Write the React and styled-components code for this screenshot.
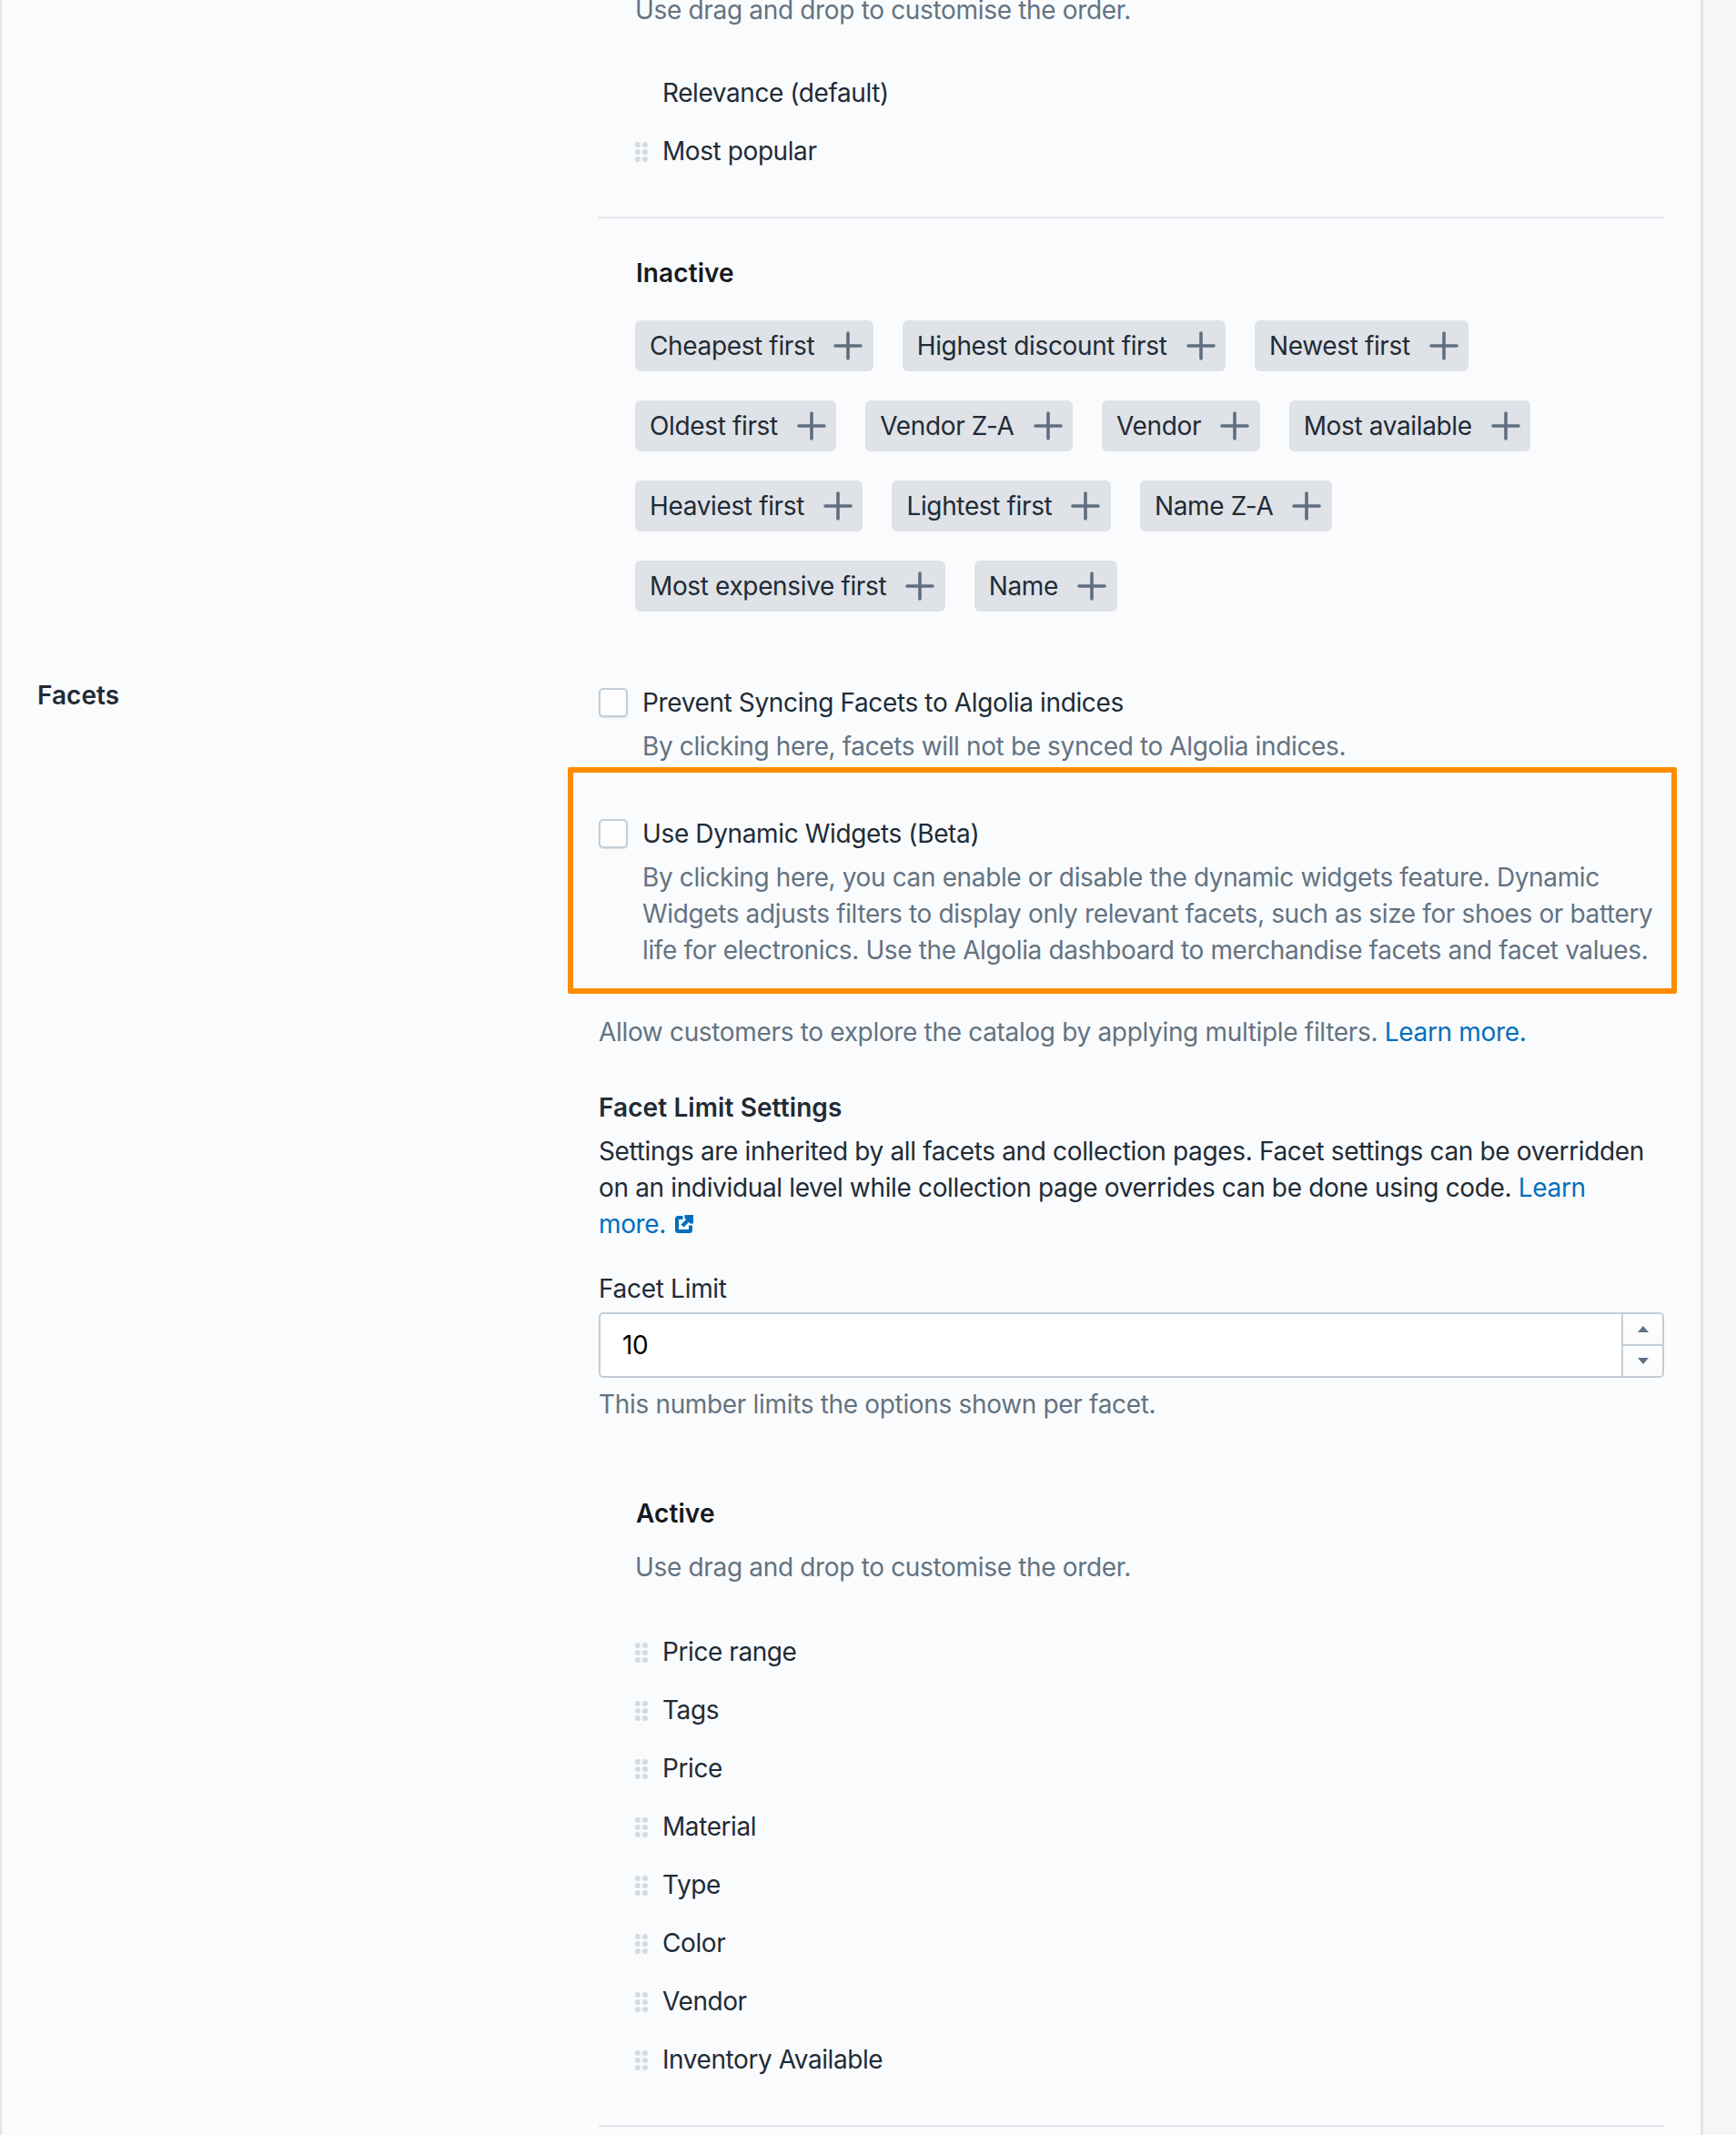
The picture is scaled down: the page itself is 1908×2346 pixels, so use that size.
import styled, { createGlobalStyle } from "styled-components";

const GlobalStyle = createGlobalStyle`
  html, body {
    margin: 0;
    padding: 0;
    background: #f5f6f8;
  }
  body {
    font-family: Inter, "Liberation Sans", sans-serif;
    font-size: 28px;
    line-height: 40px;
    letter-spacing: -0.37px;
    color: #212b36;
  }
`;

const Page = styled.div`
  width: 1908px;
  height: 2346px;
  overflow: hidden;
`;

const Panel = styled.main`
  box-sizing: border-box;
  width: 1872px;
  height: 2346px;
  background: #fafbfd;
  border-left: 2px solid #e3e5e9;
  border-right: 3px solid #e3e5e9;
  overflow: hidden;
`;

const Row = styled.section`
  display: grid;
  grid-template-columns: 656px 1171px;
`;

const RowTitle = styled.h2`
  margin: ${(p) => p.$top || 0}px 0 0 39px;
  font-size: 28px;
  line-height: 40px;
  font-weight: 600;
  letter-spacing: 0.05px;
  color: #212b36;
`;

const Content = styled.div`
  min-width: 0;
`;

const SortBlock = styled.div`
  padding-left: 40px;
  margin-top: ${(p) => p.$top || 0}px;
`;

const BlockTitle = styled.h3`
  margin: 0 0 ${(p) => p.$after || 0}px;
  padding-left: 1px;
  font-size: 28px;
  line-height: 40px;
  font-weight: 600;
  letter-spacing: 0.1px;
  color: #16191d;
`;

const Hint = styled.p`
  margin: ${(p) => p.$top || 0}px 0 ${(p) => p.$after || 0}px;
  letter-spacing: -0.33px;
  color: #637381;
`;

const SortList = styled.ul`
  list-style: none;
  margin: 0;
  padding: 0;
`;

const SortItem = styled.li`
  display: flex;
  align-items: center;
  height: 64px;
  letter-spacing: -0.42px;
`;

const HandleSlot = styled.span`
  flex: none;
  width: 30px;
  display: flex;
  align-items: center;

  svg {
    display: block;
    margin-top: 2px;
  }
`;

const Divider = styled.hr`
  margin: ${(p) => p.$top || 0}px 0 ${(p) => p.$after || 0}px;
  border: 0;
  height: 2px;
  background: #e1e3e8;
`;

const ChipWrap = styled.div`
  display: flex;
  flex-wrap: wrap;
  gap: 32px;
`;

const Chip = styled.button`
  display: inline-flex;
  align-items: center;
  height: 56px;
  padding: 0 11.5px 0 16px;
  border: 0;
  border-radius: 6px;
  background: #dfe2e7;
  color: #212b36;
  font: inherit;
  letter-spacing: -0.36px;
  gap: 21px;

  svg {
    display: block;
    width: 32px;
    height: 32px;
    stroke: #5f6f80;
  }
`;

const CheckRow = styled.label`
  display: grid;
  grid-template-columns: 32px 1fr;
  column-gap: 16px;
  margin-top: ${(p) => p.$top || 0}px;
`;

const CheckBox = styled.span`
  display: block;
  box-sizing: border-box;
  width: 32px;
  height: 32px;
  margin-top: 4px;
  border: 2px solid #c4cdd5;
  border-radius: 5px;
  background: #fdfdfe;
  box-shadow: 0 1px 1px rgba(99, 115, 129, 0.2);
`;

const CheckText = styled.div`
  min-width: 0;
`;

const CheckHelp = styled.div`
  margin-top: 8px;
  color: #637381;
`;

const Highlight = styled.div`
  margin: 3px -14px 22px -34px;
  padding: 47px 8px 22px 28px;
  border: 6px solid #ff8c00;
  border-radius: 2px;
`;

const TextLink = styled.a`
  color: #006fbb;
  text-decoration: none;
`;

const NoBreak = styled.span`
  white-space: nowrap;
`;

const SettingsTitle = styled.h4`
  margin: 43px 0 8px;
  font-size: 28px;
  line-height: 40px;
  font-weight: 600;
  letter-spacing: 0.1px;
  color: #212b36;
`;

const Paragraph = styled.p`
  margin: 0;
  letter-spacing: -0.35px;
`;

const ExternalIcon = styled.svg`
  display: inline-block;
  width: 20px;
  height: 20px;
  margin-left: 10px;
  vertical-align: 0;
`;

const FieldLabel = styled.div`
  margin: 31px 0 6px;
  letter-spacing: -0.3px;
`;

const NumberField = styled.div`
  box-sizing: border-box;
  display: flex;
  height: 72px;
  border: 2px solid #c4cdd5;
  border-radius: 5px;
  background: #fff;
  overflow: hidden;
`;

const NumberInput = styled.input`
  flex: 1;
  min-width: 0;
  border: 0;
  outline: 0;
  padding: 0 24px;
  background: transparent;
  color: #000;
  font: inherit;
  letter-spacing: inherit;
`;

const Spinner = styled.div`
  flex: none;
  width: 43px;
  display: flex;
  flex-direction: column;
  border-left: 2px solid #c4cdd5;
`;

const SpinButton = styled.div`
  flex: 1;
  display: flex;
  align-items: center;
  justify-content: center;
  background: linear-gradient(#fff, #f9fafb);

  & + & {
    border-top: 2px solid #c4cdd5;
  }

  svg {
    display: block;
    width: 12px;
    height: 7px;
    fill: #5f6f80;
  }
`;

const Handle = () => (
  <svg width="14" height="22" viewBox="0 0 14 22" fill="#d3dbe2">
    {[3, 11, 19].map((cy) => (
      <g key={cy}>
        <circle cx="2.9" cy={cy} r="3" />
        <circle cx="11" cy={cy} r="3" />
      </g>
    ))}
  </svg>
);

const PlusMark = () => (
  <svg viewBox="0 0 32 32" fill="none" strokeWidth="3.6" strokeLinecap="round">
    <path d="M16 2v28M2 16h28" />
  </svg>
);

const inactiveSorts = [
  "Cheapest first",
  "Highest discount first",
  "Newest first",
  "Oldest first",
  "Vendor Z-A",
  "Vendor",
  "Most available",
  "Heaviest first",
  "Lightest first",
  "Name Z-A",
  "Most expensive first",
  "Name",
];

const activeFacets = [
  "Price range",
  "Tags",
  "Price",
  "Material",
  "Type",
  "Color",
  "Vendor",
  "Inventory Available",
];

function App() {
  return (
    <Page>
      <GlobalStyle />
      <Panel>
        <Row>
          <div />
          <Content>
            <SortBlock $top={-9}>
              <Hint $after={39}>Use drag and drop to customise the order.</Hint>
              <SortList>
                <SortItem>
                  <HandleSlot />
                  Relevance (default)
                </SortItem>
                <SortItem>
                  <HandleSlot>
                    <Handle />
                  </HandleSlot>
                  Most popular
                </SortItem>
              </SortList>
            </SortBlock>
            <Divider $top={40} $after={40} />
            <SortBlock>
              <BlockTitle $after={32}>Inactive</BlockTitle>
              <ChipWrap>
                {inactiveSorts.map((name) => (
                  <Chip key={name} type="button">
                    {name}
                    <PlusMark />
                  </Chip>
                ))}
              </ChipWrap>
            </SortBlock>
          </Content>
        </Row>
        <Row>
          <RowTitle $top={72}>Facets</RowTitle>
          <Content>
            <CheckRow $top={80}>
              <CheckBox />
              <CheckText>
                Prevent Syncing Facets to Algolia indices
                <CheckHelp>By clicking here, facets will not be synced to Algolia indices.</CheckHelp>
              </CheckText>
            </CheckRow>
            <Highlight>
              <CheckRow>
                <CheckBox />
                <CheckText>
                  Use Dynamic Widgets (Beta)
                  <CheckHelp>
                    By clicking here, you can enable or disable the dynamic widgets feature. Dynamic Widgets adjusts
                    filters to display only relevant facets, such as size for shoes or battery life for electronics. Use
                    the Algolia dashboard to merchandise facets and facet values.
                  </CheckHelp>
                </CheckText>
              </CheckRow>
            </Highlight>
            <Hint>
              Allow customers to explore the catalog by applying multiple filters.{" "}
              <TextLink href="#">Learn more.</TextLink>
            </Hint>
            <SettingsTitle>Facet Limit Settings</SettingsTitle>
            <Paragraph>
              Settings are inherited by all facets and collection pages. Facet settings can be overridden on an
              individual level while collection page overrides can be done using code.{" "}
              <TextLink href="#">
                Learn{" "}
                <NoBreak>
                  more.
                  <ExternalIcon viewBox="0 0 20 20" fill="none">
                    <path d="M8.5 3H3.5A1.5 1.5 0 0 0 2 4.5v12A1.5 1.5 0 0 0 3.5 18h12a1.5 1.5 0 0 0 1.5-1.5V11.5" stroke="#006fbb" strokeWidth="4" />
                    <path d="M8 12 16 4" stroke="#006fbb" strokeWidth="4" />
                    <path d="M10.5 0h9.5V9.5L16.6 9.5 10.5 3.4z" fill="#006fbb" />
                  </ExternalIcon>
                </NoBreak>
              </TextLink>
            </Paragraph>
            <FieldLabel>Facet Limit</FieldLabel>
            <NumberField>
              <NumberInput defaultValue="10" />
              <Spinner>
                <SpinButton>
                  <svg viewBox="0 0 12 7">
                    <path d="M6 0 12 7H0z" />
                  </svg>
                </SpinButton>
                <SpinButton>
                  <svg viewBox="0 0 12 7">
                    <path d="M0 0H12L6 7z" />
                  </svg>
                </SpinButton>
              </Spinner>
            </NumberField>
            <Hint $top={9}>This number limits the options shown per facet.</Hint>
            <SortBlock $top={80}>
              <BlockTitle>Active</BlockTitle>
              <Hint $top={19} $after={41}>Use drag and drop to customise the order.</Hint>
              <SortList>
                {activeFacets.map((name) => (
                  <SortItem key={name}>
                    <HandleSlot>
                      <Handle />
                    </HandleSlot>
                    {name}
                  </SortItem>
                ))}
              </SortList>
            </SortBlock>
            <Divider $top={40} />
          </Content>
        </Row>
      </Panel>
    </Page>
  );
}

export default App;
